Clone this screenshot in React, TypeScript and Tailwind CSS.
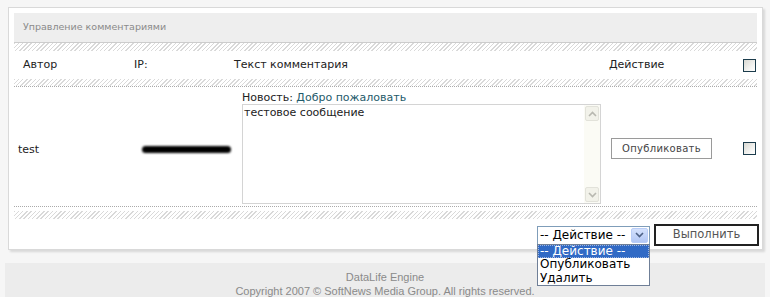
import React from 'react'

// hatch strip used between table sections
const hatch = 'bg-[repeating-linear-gradient(135deg,#d9d9d9_0px,#d9d9d9_1px,#ffffff_1px,#ffffff_3px)]'

function Checkbox() {
  return (
    <div className="w-[13px] h-[13px] border border-[#1c3c4c] bg-[linear-gradient(135deg,#d8d8d2,#f6f6f4_70%,#ffffff)]" />
  )
}

function Chevron({ up, color = '#9a9a9a' }: { up?: boolean; color?: string }) {
  return (
    <svg width="9" height="6" viewBox="0 0 9 6">
      <path
        d={up ? 'M1 5 L4.5 1.5 L8 5' : 'M1 1 L4.5 4.5 L8 1'}
        fill="none"
        stroke={color}
        strokeWidth="1.6"
      />
    </svg>
  )
}

export default function App() {
  return (
    <div className="min-h-[297px] bg-[#f6f6f6] pt-[7px] font-['DejaVu_Sans',sans-serif] text-[#222] overflow-hidden">
      {/* main panel */}
      <div className="mx-[8px] w-[755px] bg-white border border-[#d9d9d9] shadow-[2px_2px_2px_rgba(0,0,0,0.12)] px-[5px] pt-[5px] pb-[3px]">
        <div className="h-[30px] bg-[#eeeeee] border-b border-[#cccccc] flex items-center pl-[9px] text-[9.5px] text-[#8a8a8a]">
          Управление комментариями
        </div>
        <div className={`h-[8px] ${hatch}`} />

        {/* column titles */}
        <div className="h-[28px] flex items-center text-[11px]">
          <div className="w-[120px] pl-[9px]">Автор</div>
          <div className="w-[100px]">IP:</div>
          <div className="w-[375px]">Текст комментария</div>
          <div className="flex-1">Действие</div>
          <div className="w-[20px] flex justify-end pr-[1px]">
            <Checkbox />
          </div>
        </div>
        <div className={`h-[7px] ${hatch}`} />

        {/* comment row */}
        <div className="flex items-center border-t border-b border-dotted border-[#aaaaaa] pt-[4px] pb-[2px] text-[11px]">
          <div className="w-[120px] pl-[4px] pt-[5px]">test</div>
          <div className="w-[100px] pl-[8px] pt-[3px]">
            <div className="w-[89px] h-[7px] rounded-full bg-black blur-[1px]" />
          </div>
          <div className="w-[375px] pl-[8px]">
            <div className="h-[13px] leading-[13px]">
              Новость: <span className="text-[#1e5a6a]">Добро пожаловать</span>
            </div>
            <div className="w-[359px] h-[100px] border border-[#d4d4d4] flex">
              <div className="flex-1 pl-px pt-px leading-[13px]">тестовое сообщение</div>
              <div className="w-[16px] bg-[#fbfbf5] flex flex-col justify-between p-px">
                <div className="h-[15px] rounded-[2px] border border-[#e2e2da] bg-[#f2f2ea] flex items-center justify-center">
                  <Chevron up color="#b8b8b0" />
                </div>
                <div className="h-[15px] rounded-[2px] border border-[#e2e2da] bg-[#f2f2ea] flex items-center justify-center">
                  <Chevron color="#b8b8b0" />
                </div>
              </div>
            </div>
          </div>
          <div className="flex-1 pl-[2px] pt-[2px]">
            <div className="w-[101px] h-[21px] border border-[#9a9a9a] flex items-center justify-center text-[10px] tracking-[0.3px] text-[#444]">
              Опубликовать
            </div>
          </div>
          <div className="w-[20px] flex justify-end pr-[1px] pt-[2px]">
            <Checkbox />
          </div>
        </div>

        <div className={`h-[8px] mt-[4px] ${hatch}`} />

        {/* mass action controls */}
        <div className="flex justify-end items-center gap-[4px] pt-[5px] mr-[-2px]">
          <div className="relative">
            <div className="w-[113px] h-[19px] border border-[#7f9db9] bg-white flex items-center justify-between pl-[2px] pr-px text-[12px] text-black">
              <span>-- Действие --</span>
              <div className="w-[17px] h-[15px] rounded-[2px] border border-[#b9cdf7] bg-[linear-gradient(#d4e1fc,#b2c7f5)] flex items-center justify-center">
                <Chevron color="#4d6185" />
              </div>
            </div>
            <div className="absolute left-0 top-[18px] w-[113px] border border-[#6f7f97] bg-white text-[12px] leading-[13.5px] text-black z-10">
              <div className="bg-[#316ac5] text-white pl-[2px] outline-1 outline-dotted outline-[#9fb6e0] -outline-offset-1">-- Действие --</div>
              <div className="pl-[2px]">Опубликовать</div>
              <div className="pl-[2px]">Удалить</div>
            </div>
          </div>
          <div className="w-[105px] h-[22px] border-2 border-[#222] flex items-center justify-center text-[11.5px] text-[#555] bg-white">
            Выполнить
          </div>
        </div>
      </div>

      {/* footer */}
      <div className="mx-[5px] mt-[13px] bg-[#ececec] pt-[7px] pb-[8px] text-center text-[11px] leading-[14px] text-[#8a8a8a] font-['Liberation_Sans',sans-serif]">
        <div>DataLife Engine</div>
        <div>Copyright 2007 © SoftNews Media Group. All rights reserved.</div>
      </div>
    </div>
  )
}
